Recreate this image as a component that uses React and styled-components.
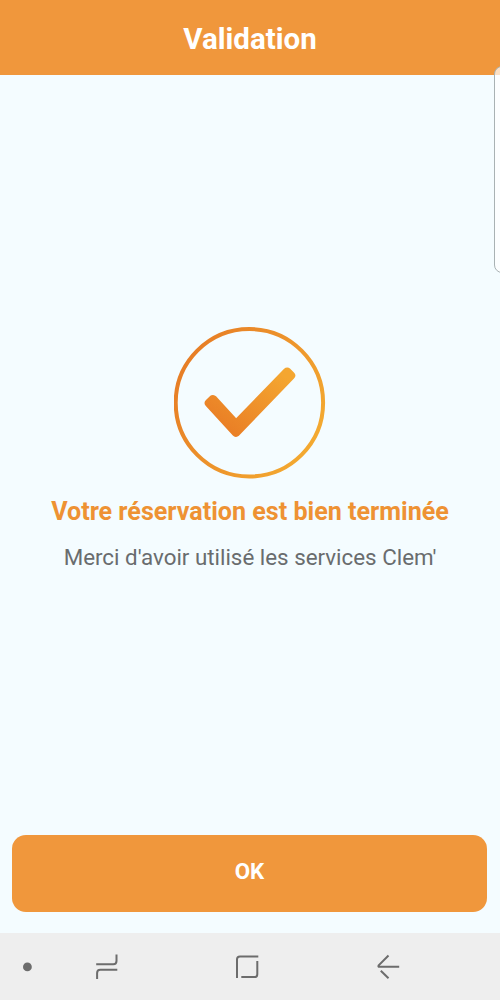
import React from "react";
import styled, { createGlobalStyle } from "styled-components";

const GlobalStyle = createGlobalStyle`
  * {
    box-sizing: border-box;
  }
  body {
    margin: 0;
    font-family: Roboto, "Liberation Sans", sans-serif;
  }
`;

const Screen = styled.div`
  position: relative;
  display: flex;
  flex-direction: column;
  width: 500px;
  height: 1000px;
  overflow: hidden;
  background: #f4fcff;
`;

const Header = styled.header`
  display: flex;
  align-items: center;
  justify-content: center;
  height: 75px;
  padding-top: 3px;
  background: #f0973c;

  h1 {
    margin: 0;
    color: #fff;
    font-size: 29.5px;
    font-weight: 700;
    line-height: 34px;
  }
`;

const EdgeHandle = styled.div`
  position: absolute;
  top: 66px;
  right: -10px;
  width: 16px;
  height: 207px;
  border: 1px solid #a9b2b4;
  border-radius: 8px;
  background: rgba(255, 255, 255, 0.7);
`;

const Content = styled.main`
  flex: 1;
  display: flex;
  flex-direction: column;
  align-items: center;
  padding-top: 251px;
`;

const Badge = styled.svg`
  display: block;
  width: 152px;
  height: 154px;
`;

const Heading = styled.h2`
  margin: 17px 0 0;
  color: #ee9233;
  font-size: 25.1px;
  font-weight: 700;
  line-height: 30px;
  white-space: nowrap;
`;

const Message = styled.p`
  margin: 15px 0 0;
  color: #696c6e;
  font-size: 22.35px;
  line-height: 30px;
  white-space: nowrap;
`;

const Footer = styled.div`
  padding: 0 13px 21px 12px;
`;

const Button = styled.button`
  display: block;
  width: 100%;
  height: 77px;
  padding: 0 0 5px;
  border: none;
  border-radius: 14px;
  background: #f0973c;
  color: #fff;
  font-family: inherit;
  font-size: 22.3px;
  font-weight: 700;
`;

const NavBar = styled.nav`
  height: 67px;
  background: #eee;

  svg {
    display: block;
  }
`;

const CheckBadge = () => {
  return (
    <Badge viewBox="174 326 152 154" fill="none">
      <defs>
        <linearGradient id="ring" x1="0" y1="0.2" x2="1" y2="0.8">
          <stop offset="0" stopColor="#e67b25" />
          <stop offset="1" stopColor="#f4ac31" />
        </linearGradient>
        <linearGradient id="check" x1="0.2" y1="0.9" x2="0.95" y2="0.1">
          <stop offset="0" stopColor="#ea8026" />
          <stop offset="1" stopColor="#f4a630" />
        </linearGradient>
      </defs>
      <circle cx="249.4" cy="402.8" r="73.7" stroke="url(#ring)" strokeWidth="4" />
      <path
        d="M212.9 399.2L209 403.1L236 432.6L290.9 375.5L287.2 371.8L236 424.4Z"
        fill="url(#check)"
        stroke="url(#check)"
        strokeWidth="8.6"
        strokeLinejoin="round"
      />
    </Badge>
  );
};

const NavIcons = () => {
  return (
    <svg width="500" height="67" viewBox="0 933 500 67" fill="none">
      <circle cx="27.4" cy="966.9" r="4.4" fill="#6c6c6c" />
      <g stroke="#6c6c6c" strokeWidth="2">
        <path d="M96.2 964.2H113.3Q116.5 964.2 116.5 961V954.5" />
        <path d="M117.3 969.7H100.3Q97.1 969.7 97.1 973V979" />
        <path d="M237 978V959.3Q237 956.4 240 956.4H258.3" />
        <path d="M257.3 961V974.2Q257.3 977.1 254.3 977.1H241.3" />
        <path d="M388.5 955.5L378.7 965.3Q377.8 966.8 379.5 966.8H399.2" />
        <path d="M380.8 970.8L388.5 978.3" />
      </g>
    </svg>
  );
};

const App = () => {
  return (
    <>
      <GlobalStyle />
      <Screen>
        <Header>
          <h1>Validation</h1>
        </Header>
        <EdgeHandle />
        <Content>
          <CheckBadge />
          <Heading>Votre réservation est bien terminée</Heading>
          <Message>Merci d'avoir utilisé les services Clem'</Message>
        </Content>
        <Footer>
          <Button>OK</Button>
        </Footer>
        <NavBar>
          <NavIcons />
        </NavBar>
      </Screen>
    </>
  );
};

export default App;
